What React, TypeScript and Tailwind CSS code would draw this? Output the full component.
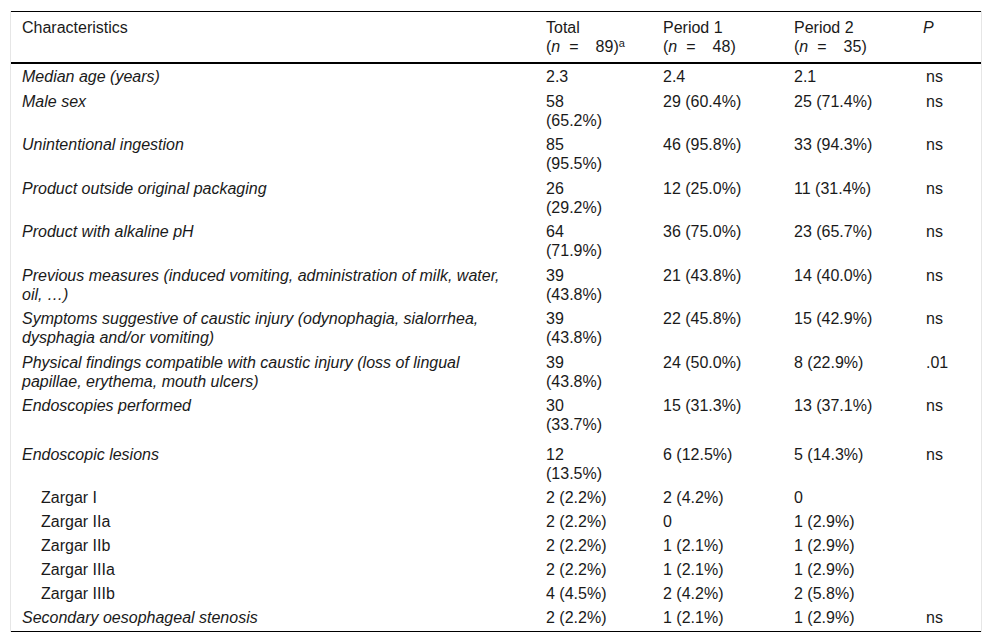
import React from "react";

type Row = {
  label: string[];
  sub?: boolean;
  total: string[];
  p1: string;
  p2: string;
  p: string;
  extra?: boolean;
};

const rows: Row[] = [
  { label: ["Median age (years)"], total: ["2.3"], p1: "2.4", p2: "2.1", p: "ns" },
  { label: ["Male sex"], total: ["58", "(65.2%)"], p1: "29 (60.4%)", p2: "25 (71.4%)", p: "ns" },
  { label: ["Unintentional ingestion"], total: ["85", "(95.5%)"], p1: "46 (95.8%)", p2: "33 (94.3%)", p: "ns" },
  { label: ["Product outside original packaging"], total: ["26", "(29.2%)"], p1: "12 (25.0%)", p2: "11 (31.4%)", p: "ns" },
  { label: ["Product with alkaline pH"], total: ["64", "(71.9%)"], p1: "36 (75.0%)", p2: "23 (65.7%)", p: "ns" },
  {
    label: ["Previous measures (induced vomiting, administration of milk, water,", "oil, …)"],
    total: ["39", "(43.8%)"],
    p1: "21 (43.8%)",
    p2: "14 (40.0%)",
    p: "ns",
  },
  {
    label: ["Symptoms suggestive of caustic injury (odynophagia, sialorrhea,", "dysphagia and/or vomiting)"],
    total: ["39", "(43.8%)"],
    p1: "22 (45.8%)",
    p2: "15 (42.9%)",
    p: "ns",
  },
  {
    label: ["Physical findings compatible with caustic injury (loss of lingual", "papillae, erythema, mouth ulcers)"],
    total: ["39", "(43.8%)"],
    p1: "24 (50.0%)",
    p2: "8 (22.9%)",
    p: ".01",
  },
  { label: ["Endoscopies performed"], total: ["30", "(33.7%)"], p1: "15 (31.3%)", p2: "13 (37.1%)", p: "ns" },
  { label: ["Endoscopic lesions"], total: ["12", "(13.5%)"], p1: "6 (12.5%)", p2: "5 (14.3%)", p: "ns", extra: true },
  { label: ["Zargar I"], sub: true, total: ["2 (2.2%)"], p1: "2 (4.2%)", p2: "0", p: "" },
  { label: ["Zargar IIa"], sub: true, total: ["2 (2.2%)"], p1: "0", p2: "1 (2.9%)", p: "" },
  { label: ["Zargar IIb"], sub: true, total: ["2 (2.2%)"], p1: "1 (2.1%)", p2: "1 (2.9%)", p: "" },
  { label: ["Zargar IIIa"], sub: true, total: ["2 (2.2%)"], p1: "1 (2.1%)", p2: "1 (2.9%)", p: "" },
  { label: ["Zargar IIIb"], sub: true, total: ["4 (4.5%)"], p1: "2 (4.2%)", p2: "2 (5.8%)", p: "" },
  { label: ["Secondary oesophageal stenosis"], total: ["2 (2.2%)"], p1: "1 (2.1%)", p2: "1 (2.9%)", p: "ns" },
];

function Lines({ lines }: { lines: string[] }) {
  return (
    <>
      {lines.map((l, i) => (
        <span key={i} className="block whitespace-nowrap">
          {l}
        </span>
      ))}
    </>
  );
}

// "(n = 48)" with the wide fixed gaps of the source
function NCount({ n, sup }: { n: string; sup?: string }) {
  return (
    <span className="block whitespace-nowrap">
      (<i>n</i>
      <span className="inline-block w-[9px]" />=
      <span className="inline-block w-[17px]" />
      {n})
      {sup && <sup className="text-[11px]">{sup}</sup>}
    </span>
  );
}

export default function App() {
  return (
    <div className="pt-[11px] pl-[10px] bg-white font-['Liberation_Sans',Arial,sans-serif] text-[16px] leading-[19px] text-[#1a1a1a]">
      <div className="w-[972px] border-x border-[#e6e6e6]">
        <table className="w-full table-fixed border-collapse">
          <colgroup>
            <col className="w-[523px]" />
            <col className="w-[117px]" />
            <col className="w-[131px]" />
            <col className="w-[129px]" />
            <col />
          </colgroup>
          <thead>
            <tr className="border-t border-b-2 border-black align-top text-left">
              <th className="font-normal pl-[11px] pt-[6px] pb-[6px]">Characteristics</th>
              <th className="font-normal pl-[12px] pt-[6px] pb-[6px]">
                <span className="block">Total</span>
                <NCount n="89" sup="a" />
              </th>
              <th className="font-normal pl-[12px] pt-[6px] pb-[6px]">
                <span className="block">Period 1</span>
                <NCount n="48" />
              </th>
              <th className="font-normal pl-[12px] pt-[6px] pb-[6px]">
                <span className="block">Period 2</span>
                <NCount n="35" />
              </th>
              <th className="font-normal italic pl-[12px] pt-[6px] pb-[6px]">P</th>
            </tr>
          </thead>
          <tbody>
            {rows.map((r, i) => {
              const last = i === rows.length - 1;
              let pad = "pt-[3px] pb-[2.5px]";
              if (r.extra) pad = "pt-[8px] pb-[2.5px]";
              else if (last) pad = "pt-[3px] pb-[4px]";
              else if (r.sub) pad = "pt-[3px] pb-[2px]";
              return (
                <tr key={i} className={`align-top ${last ? "border-b border-black" : ""}`}>
                  <td className={`${pad} ${r.sub ? "pl-[30px] not-italic" : "pl-[11px] italic"}`}>
                    <Lines lines={r.label} />
                  </td>
                  <td className={`${pad} pl-[12px]`}>
                    <Lines lines={r.total} />
                  </td>
                  <td className={`${pad} pl-[12px]`}>{r.p1}</td>
                  <td className={`${pad} pl-[12px]`}>{r.p2}</td>
                  <td className={`${pad} pl-[15px]`}>{r.p}</td>
                </tr>
              );
            })}
          </tbody>
        </table>
      </div>
    </div>
  );
}
